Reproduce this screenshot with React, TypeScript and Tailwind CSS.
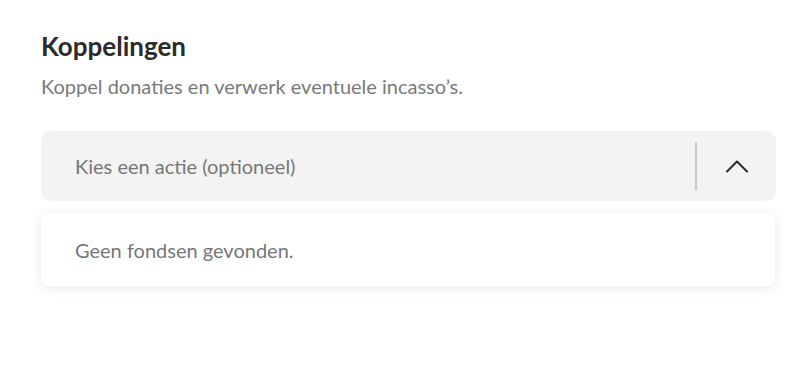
export default function App() {
  return (
    <div className="min-h-screen bg-white font-['Lato',sans-serif] px-[41px] pt-[31px]">
      <h2 className="text-[26px] leading-[30px] font-bold text-[#2b2b2b]">Koppelingen</h2>
      <p className="mt-[11px] text-[20px] leading-[28px] text-[#7a7a7a]">
        Koppel donaties en verwerk eventuele incasso’s.
      </p>

      <div className="mt-[31px] w-[735px] h-[70px] rounded-[10px] bg-[#f3f3f3] flex items-center">
        <span className="flex-1 pl-[34px] text-[20px] text-[#777777]">Kies een actie (optioneel)</span>
        <div className="w-[2px] h-[48px] bg-[#c8c8c8]" />
        <div className="w-[79px] flex items-center justify-center">
          <svg width="24" height="14" viewBox="0 0 24 14" fill="none">
            <path d="M2 12.5L12 2.5L22 12.5" stroke="#2b2b2b" strokeWidth="2" strokeLinecap="round" strokeLinejoin="round" />
          </svg>
        </div>
      </div>

      <div className="mt-[12px] w-[734px] h-[73px] rounded-[8px] bg-white shadow-[0_2px_12px_rgba(0,0,0,0.09)] flex items-center">
        <span className="pl-[34px] text-[20px] text-[#777777]">Geen fondsen gevonden.</span>
      </div>
    </div>
  );
}
